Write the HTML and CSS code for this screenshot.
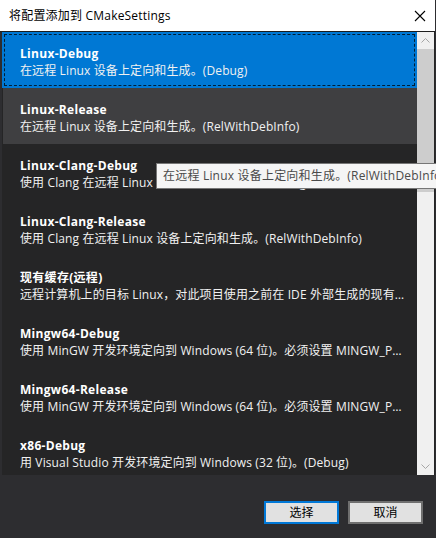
FILE: index.html
```html
<!DOCTYPE html>
<html lang="zh">
<head>
<meta charset="utf-8">
<link rel="stylesheet" href="styles.css">
</head>
<body>
<div class="window">
  <div class="titlebar">
    <span class="title">将配置添加到 CMakeSettings</span>
    <svg class="close" width="12" height="12" viewBox="0 0 12 12"><path d="M1 1 L11 11 M11 1 L1 11" stroke="#000" stroke-width="1.1" fill="none"/></svg>
  </div>
  <div class="main">
    <div class="list-wrap">
      <div class="list">
        <div class="item selected">
          <div class="name">Linux-Debug</div>
          <div class="desc">在远程 Linux 设备上定向和生成。(Debug)</div>
        </div>
        <div class="item hover">
          <div class="name">Linux-Release</div>
          <div class="desc">在远程 Linux 设备上定向和生成。(RelWithDebInfo)</div>
        </div>
        <div class="item">
          <div class="name">Linux-Clang-Debug</div>
          <div class="desc">使用 Clang 在远程 Linux 设备上定向和生成。(Debug)</div>
        </div>
        <div class="item">
          <div class="name">Linux-Clang-Release</div>
          <div class="desc">使用 Clang 在远程 Linux 设备上定向和生成。(RelWithDebInfo)</div>
        </div>
        <div class="item">
          <div class="name">现有缓存(远程)</div>
          <div class="desc">远程计算机上的目标 Linux，对此项目使用之前在 IDE 外部生成的现有CMake缓存。</div>
        </div>
        <div class="item">
          <div class="name">Mingw64-Debug</div>
          <div class="desc">使用 MinGW 开发环境定向到 Windows (64 位)。必须设置 MINGW_PREFIX。(Debug)</div>
        </div>
        <div class="item">
          <div class="name">Mingw64-Release</div>
          <div class="desc">使用 MinGW 开发环境定向到 Windows (64 位)。必须设置 MINGW_PREFIX。(Release)</div>
        </div>
        <div class="item">
          <div class="name">x86-Debug</div>
          <div class="desc">用 Visual Studio 开发环境定向到 Windows (32 位)。(Debug)</div>
        </div>
      </div>
      <div class="scrollbar">
        <div class="arrow"><svg width="9" height="5" viewBox="0 0 9 5"><path d="M0.5 4.5 L4.5 0.5 L8.5 4.5" stroke="#a6a6a6" fill="none"/></svg></div>
        <div class="thumb"></div>
        <div class="track"></div>
        <div class="arrow"><svg width="9" height="5" viewBox="0 0 9 5"><path d="M0.5 0.5 L4.5 4.5 L8.5 0.5" stroke="#a6a6a6" fill="none"/></svg></div>
      </div>
    </div>
    <div class="footer">
      <button class="btn primary">选择</button>
      <button class="btn">取消</button>
    </div>
  </div>
  <div class="tooltip">在远程 Linux 设备上定向和生成。(RelWithDebInfo)</div>
</div>
</body>
</html>
```

FILE: styles.css
```css
html, body {
  margin: 0;
  padding: 0;
  background: #2d2d30;
}
body {
  font-family: "Open Sans", "Noto Sans CJK SC", sans-serif;
  font-size: 12px;
}
.window {
  position: relative;
  width: 436px;
  height: 538px;
  overflow: hidden;
  display: flex;
  flex-direction: column;
  background: #2d2d30;
}
.titlebar {
  height: 31px;
  width: 435px;
  background: #ffffff;
  border-bottom: 1px solid #1e1e1e;
  display: flex;
  align-items: center;
  justify-content: space-between;
}
.title {
  padding-left: 9px;
  color: #000;
  font-size: 12px;
  line-height: 16px;
  letter-spacing: 0.2px;
}
.close {
  margin-right: 9px;
}
.main {
  flex: 1;
  display: flex;
  flex-direction: column;
  padding-left: 2px;
  padding-right: 1px;
}
.list-wrap {
  height: 443px;
  display: flex;
  background: #252526;
}
.list {
  width: 415px;
  overflow: hidden;
}
.item {
  height: 56px;
  box-sizing: border-box;
  padding: 13px 10px 0 18px;
  color: #f1f1f1;
}
.item.selected {
  background: #0078d4;
  outline: 1px dashed rgba(0, 0, 0, 0.75);
  outline-offset: -3px;
}
.item.hover {
  background: #3f3f41;
  margin-left: 1px;
  padding-left: 17px;
}
.name {
  font-weight: 700;
  line-height: 17px;
  color: #ffffff;
  white-space: nowrap;
  letter-spacing: 0.3px;
}
.desc {
  line-height: 17px;
  color: #f1f1f1;
  white-space: nowrap;
  overflow: hidden;
  text-overflow: ellipsis;
  letter-spacing: 0.12px;
}
.scrollbar {
  width: 17px;
  display: flex;
  flex-direction: column;
  background: #f0f0f0;
}
.arrow {
  height: 17px;
  display: flex;
  align-items: center;
  justify-content: center;
  background: #f0f0f0;
}
.thumb {
  height: 143px;
  background: #cdcdcd;
}
.track {
  flex: 1;
}
.footer {
  flex: 1;
  display: flex;
  justify-content: flex-end;
  align-items: flex-start;
  gap: 9px;
  padding-top: 26px;
  padding-right: 12px;
}
.btn {
  width: 75px;
  height: 23px;
  box-sizing: border-box;
  background: #e1e1e1;
  border: 2px solid #6f6f6f;
  font-family: "Open Sans", "Noto Sans CJK SC", sans-serif;
  font-size: 12px;
  color: #000;
  padding: 0;
  line-height: 18px;
}
.btn.primary {
  border-color: #0078d7;
}
.tooltip {
  position: absolute;
  left: 156px;
  top: 163px;
  height: 26px;
  box-sizing: border-box;
  padding: 0 0 0 6px;
  width: 300px;
  background: #f5f5f5;
  border: 1px solid #767676;
  color: #4a4a4a;
  line-height: 24px;
  white-space: nowrap;
  letter-spacing: 0.2px;
}
```
